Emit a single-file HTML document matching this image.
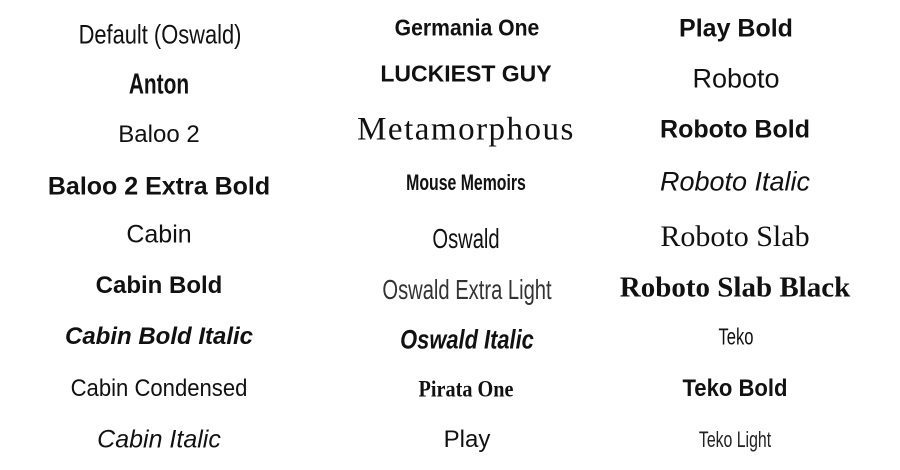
<!DOCTYPE html>
<html><head><meta charset="utf-8"><style>
html,body{margin:0;padding:0;background:#fff;}
body{width:900px;height:470px;position:relative;overflow:hidden;font-family:"Liberation Sans",sans-serif;color:#111;}
.t{position:absolute;white-space:nowrap;transform:translate(-50%,-50%);line-height:1;}
.n{display:inline-block;transform:scaleX(.72);}
.c{display:inline-block;transform:scaleX(.82);}
</style></head><body>
<div class="t" style="left:160px;top:35px;font-size:27px;"><span class="n" style="transform:scaleX(.81)">Default (Oswald)</span></div>
<div class="t" style="left:159px;top:85px;font-size:29px;font-weight:bold;"><span class="n">Anton</span></div>
<div class="t" style="left:159px;top:135px;font-size:24px;">Baloo 2</div>
<div class="t" style="left:159px;top:187px;font-size:25px;font-weight:bold;">Baloo 2 Extra Bold</div>
<div class="t" style="left:159px;top:235px;font-size:25px;">Cabin</div>
<div class="t" style="left:159px;top:286px;font-size:24px;font-weight:bold;">Cabin Bold</div>
<div class="t" style="left:159px;top:337px;font-size:24px;font-weight:bold;font-style:italic;">Cabin Bold Italic</div>
<div class="t" style="left:159px;top:389px;font-size:24px;"><span class="c" style="transform:scaleX(.92)">Cabin Condensed</span></div>
<div class="t" style="left:159px;top:440px;font-size:25px;font-style:italic;">Cabin Italic</div>

<div class="t" style="left:467px;top:28px;font-size:23px;font-weight:bold;"><span class="c" style="transform:scaleX(.92)">Germania One</span></div>
<div class="t" style="left:466px;top:74px;font-size:23px;font-weight:bold;">LUCKIEST GUY</div>
<div class="t" style="left:466px;top:130px;font-size:33px;font-family:'Liberation Serif',serif;letter-spacing:1.5px;">Metamorphous</div>
<div class="t" style="left:466px;top:183px;font-size:22px;font-weight:bold;"><span class="n">Mouse Memoirs</span></div>
<div class="t" style="left:466px;top:239px;font-size:28px;"><span class="n">Oswald</span></div>
<div class="t" style="left:467px;top:290px;font-size:28px;font-weight:300;color:#333;"><span class="n">Oswald Extra Light</span></div>
<div class="t" style="left:467px;top:340px;font-size:27px;font-weight:bold;font-style:italic;"><span class="n" style="transform:scaleX(.81)">Oswald Italic</span></div>
<div class="t" style="left:466px;top:389px;font-size:23px;font-weight:bold;font-family:'Liberation Serif',serif;"><span class="n" style="transform:scaleX(.88)">Pirata One</span></div>
<div class="t" style="left:467px;top:440px;font-size:24px;">Play</div>

<div class="t" style="left:736px;top:29px;font-size:25px;font-weight:bold;">Play Bold</div>
<div class="t" style="left:736px;top:79px;font-size:27px;">Roboto</div>
<div class="t" style="left:735px;top:130px;font-size:25px;font-weight:bold;">Roboto Bold</div>
<div class="t" style="left:735px;top:182px;font-size:27px;font-style:italic;">Roboto Italic</div>
<div class="t" style="left:735px;top:237px;font-size:30px;font-family:'Liberation Serif',serif;">Roboto Slab</div>
<div class="t" style="left:735px;top:288px;font-size:29px;font-weight:bold;font-family:'Liberation Serif',serif;">Roboto Slab Black</div>
<div class="t" style="left:736px;top:337px;font-size:23px;"><span class="n">Teko</span></div>
<div class="t" style="left:735px;top:389px;font-size:24px;font-weight:bold;"><span class="n" style="transform:scaleX(.92)">Teko Bold</span></div>
<div class="t" style="left:735px;top:440px;font-size:22px;color:#222;"><span class="n">Teko Light</span></div>
</body></html>
